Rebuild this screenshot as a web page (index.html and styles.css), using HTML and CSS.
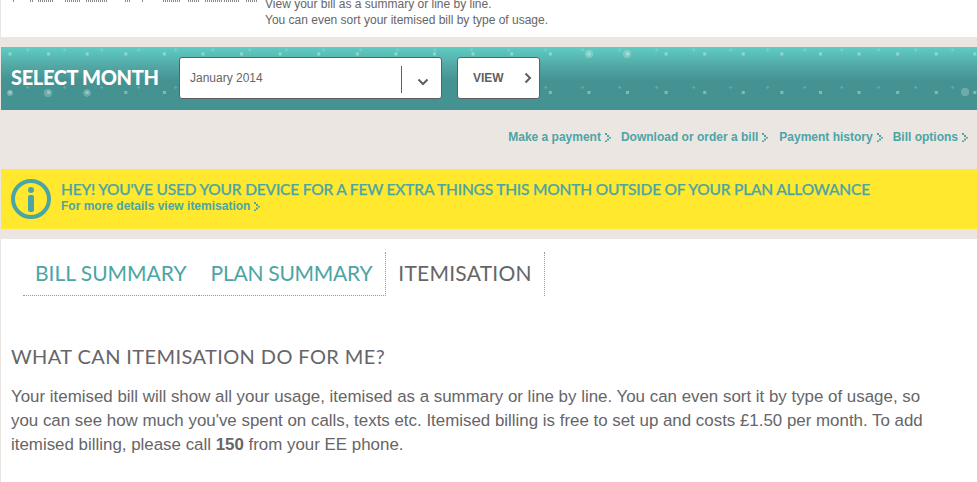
FILE: index.html
```html
<!DOCTYPE html>
<html lang="en">
<head>
    <meta charset="UTF-8">
    <title>Your bill</title>
    <link rel="stylesheet" href="styles.css">
</head>
<body>
    <svg class="defs" width="0" height="0">
        <symbol id="chev" viewBox="0 0 6 9">
            <path d="M0 0h2v2h-2zM2 2h2v2h-2zM4 4h2v1.5h-2zM2 5.5h2v2h-2zM0 7.5h2v1.5h-2z" fill="#4ba5a5"/>
        </symbol>
    </svg>

    <div class="intro">
        <svg class="intro-dots" width="270" height="3" viewBox="0 0 270 3">
            <path d="M13 1h2M30 1h4M38 1h16M65 1h15M86 1h21M125 1h5M142 1h2M163 1h17M188 1h12M205 1h17M224 1h16M246 1h12" stroke="#8a8a8a" stroke-width="2" stroke-dasharray="1 1" fill="none"/>
        </svg>
        <p class="intro-text">View your bill as a summary or line by line.<br>You can even sort your itemised bill by type of usage.</p>
    </div>

    <div class="month-bar">
        <span class="month-title">SELECT MONTH</span>
        <div class="month-select">
            <span class="month-value">January 2014</span>
            <span class="month-arrow">
                <svg width="12" height="8" viewBox="0 0 12 8"><path d="M1.5 1.5l4.5 4.5 4.5-4.5" fill="none" stroke="#5f5f60" stroke-width="2"/></svg>
            </span>
        </div>
        <a class="view-btn" href="#">
            VIEW
            <svg width="8" height="12" viewBox="0 0 8 12"><path d="M1.5 1.5l4.5 4.5-4.5 4.5" fill="none" stroke="#5f5f60" stroke-width="2"/></svg>
        </a>
    </div>

    <div class="bill-links">
        <a href="#">Make a payment<svg class="chev"><use href="#chev"/></svg></a>
        <a class="link-download" href="#">Download or order a bill<svg class="chev"><use href="#chev"/></svg></a>
        <a href="#">Payment history<svg class="chev"><use href="#chev"/></svg></a>
        <a href="#">Bill options<svg class="chev"><use href="#chev"/></svg></a>
    </div>

    <div class="notice">
        <svg class="notice-icon" width="40" height="40" viewBox="0 0 40 40">
            <circle cx="20" cy="20" r="18" fill="none" stroke="#4ba5a5" stroke-width="4"/>
            <circle cx="20" cy="11" r="3" fill="#4ba5a5"/>
            <rect x="17" y="16" width="6" height="17" rx="2" fill="#4ba5a5"/>
        </svg>
        <div class="notice-text">
            <div class="notice-title">HEY! YOU'VE USED YOUR DEVICE FOR A FEW EXTRA THINGS THIS MONTH OUTSIDE OF YOUR PLAN ALLOWANCE</div>
            <a class="notice-link" href="#">For more details view itemisation<svg class="chev"><use href="#chev"/></svg></a>
        </div>
    </div>

    <div class="content">
        <div class="tabs">
            <a class="tab tab-bill" href="#">BILL SUMMARY</a>
            <a class="tab tab-plan" href="#">PLAN SUMMARY</a>
            <a class="tab tab-active" href="#">ITEMISATION</a>
        </div>
        <h2>WHAT CAN ITEMISATION DO FOR ME?</h2>
        <p class="body-text">Your itemised bill will show all your usage, itemised as a summary or line by line. You can even sort it by type of usage, so you can see how much you've spent on calls, texts etc. Itemised billing is free to set up and costs £1.50 per month. To add itemised billing, please call <strong>150</strong> from your EE phone.</p>
    </div>
</body>
</html>
```
FILE: styles.css
```css
body {
    margin: 0;
    height: 482px;
    overflow: hidden;
    padding-left: 1px;
    background-color: #ece6e3;
    color: #666567;
    font-family: "Liberation Sans", Arial, sans-serif;
}

a {
    text-decoration: none;
}

.defs {
    position: absolute;
}

.intro {
    height: 37px;
    background: #fff;
    position: relative;
    overflow: hidden;
}

.intro-dots {
    position: absolute;
    left: -1px;
    top: 0;
}

.intro-text {
    margin: -4px 0 0;
    padding-left: 264px;
    font-size: 12px;
    line-height: 16px;
}

.month-bar {
    display: flex;
    align-items: center;
    height: 63px;
    margin-top: 10px;
    padding: 0 0 1px 10px;
    box-sizing: border-box;
    background-color: #449291;
    background-image:
        radial-gradient(circle at 9px 46px, rgba(255, 255, 255, 0.22) 3px, transparent 3.5px),
        radial-gradient(circle at 47px 46px, rgba(255, 255, 255, 0.22) 4px, transparent 4.5px),
        radial-gradient(circle at 86px 46px, rgba(255, 255, 255, 0.22) 3.5px, transparent 4px),
        radial-gradient(circle at 588px 7px, rgba(255, 255, 255, 0.22) 4px, transparent 4.5px),
        radial-gradient(circle at 626px 7px, rgba(255, 255, 255, 0.22) 4px, transparent 4.5px),
        radial-gradient(circle at 964px 45px, rgba(255, 255, 255, 0.22) 4px, transparent 4.5px),
        radial-gradient(circle, rgba(255, 255, 255, 0.35) 1.4px, transparent 2px),
        radial-gradient(circle, rgba(255, 255, 255, 0.35) 1.4px, transparent 2px),
        radial-gradient(circle, rgba(255, 255, 255, 0.18) 1px, transparent 1.5px),
        radial-gradient(circle, rgba(255, 255, 255, 0.18) 1px, transparent 1.5px),
        linear-gradient(#5fcdc4 0, #53a9a6 18px, #449291 34px);
    background-size: 100% 100%, 100% 100%, 100% 100%, 100% 100%, 100% 100%, 100% 100%, 38.6px 63px, 38.6px 63px, 37px 63px, 37px 63px, 100% 100%;
    background-position: 0 0, 0 0, 0 0, 0 0, 0 0, 0 0, -10.3px -24.5px, -10.3px 13.5px, 8.2px -28.5px, 8.2px 8.5px, 0 0;
    background-repeat: no-repeat, no-repeat, no-repeat, no-repeat, no-repeat, no-repeat, repeat-x, repeat-x, repeat-x, repeat-x, no-repeat;
}

.month-title {
    width: 168px;
    margin-bottom: 2px;
    color: #fff;
    font-family: Lato, sans-serif;
    font-size: 20px;
    font-weight: 900;
    letter-spacing: -0.35px;
}

.month-select {
    display: flex;
    align-items: center;
    justify-content: space-between;
    width: 263px;
    height: 42px;
    box-sizing: border-box;
    background: #fff;
    border: 1px solid #5f5f60;
    border-radius: 3px;
    font-size: 12px;
}

.month-value {
    padding-left: 10px;
}

.month-arrow {
    display: flex;
    align-items: center;
    justify-content: center;
    width: 40px;
    height: 27px;
    margin-top: 3px;
    padding: 5px 0 0 3px;
    border-left: 1px solid #5f5f60;
    box-sizing: border-box;
}

.view-btn {
    display: flex;
    align-items: center;
    justify-content: space-between;
    width: 83px;
    height: 42px;
    margin-left: 15px;
    padding: 0 7px 0 15px;
    box-sizing: border-box;
    background: #fff;
    border: 1px solid #5f5f60;
    border-radius: 3px;
    color: #5f5f60;
    font-size: 12px;
    font-weight: bold;
}

.bill-links {
    display: flex;
    justify-content: flex-end;
    gap: 10px;
    height: 59px;
    padding: 20px 9px 0 0;
    box-sizing: border-box;
}

.link-download {
    margin-right: 1px;
}

.bill-links a,
.notice-link {
    color: #4ba5a5;
    font-size: 12px;
    font-weight: bold;
}

.chev {
    width: 6px;
    height: 9px;
    margin-left: 4px;
    vertical-align: -1px;
}

.notice {
    display: flex;
    align-items: center;
    gap: 10px;
    height: 60px;
    padding-left: 10px;
    box-sizing: border-box;
    background: #ffe82e;
}

.notice-text {
    margin-top: -6px;
}

.notice-title {
    color: #4ba5a5;
    font-family: Lato, sans-serif;
    font-size: 15.5px;
    font-weight: 500;
    letter-spacing: -0.19px;
    -webkit-text-stroke: 0.25px #4ba5a5;
    line-height: 20px;
}

.notice-link {
    display: block;
    line-height: 15px;
}

.content {
    height: 243px;
    margin-top: 10px;
    padding: 13px 10px 0;
    box-sizing: border-box;
    background: #fff;
}

.tabs {
    display: flex;
    height: 44px;
    margin-left: 12px;
}

.tab {
    display: flex;
    align-items: center;
    box-sizing: border-box;
    padding-bottom: 3px;
    color: #4ba5a5;
    font-family: Lato, sans-serif;
    font-size: 21px;
    border-bottom: 1px dotted #999;
}

.tab-bill {
    padding-left: 12px;
    padding-right: 12px;
}

.tab-plan {
    padding-left: 12px;
    padding-right: 12.5px;
    letter-spacing: -0.25px;
    border-right: 1px dotted #999;
}

.tab-active {
    padding-left: 12.5px;
    padding-right: 12.5px;
    color: #666567;
    letter-spacing: 0.25px;
    border-bottom: 0;
    border-right: 1px dotted #999;
}

h2 {
    margin: 48px 0 0;
    font-family: Lato, sans-serif;
    font-size: 20px;
    font-weight: 400;
    letter-spacing: 0.4px;
    line-height: 24px;
}

.body-text {
    max-width: 930px;
    margin: 17px 0 0;
    font-size: 16.9px;
    line-height: 24px;
}
```
